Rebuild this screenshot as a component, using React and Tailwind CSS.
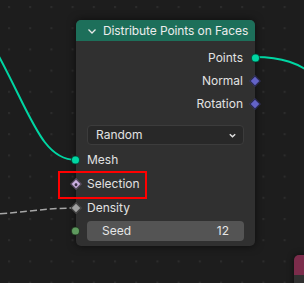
import React from "react";

const font = { fontFamily: "Inter, 'DejaVu Sans', sans-serif" };

function Circle({ color, side }) {
  return (
    <span
      className={`absolute top-1/2 -translate-y-1/2 w-[9px] h-[9px] rounded-full border border-black/60 ${
        side === "left" ? "left-[-5px]" : "right-[-5px]"
      } ${color}`}
    />
  );
}

function Diamond({ color, side, dot }) {
  return (
    <span
      className={`absolute top-1/2 w-[8px] h-[8px] -translate-y-1/2 rotate-45 border border-black/60 flex items-center justify-center ${
        side === "left" ? "left-[-4px]" : "right-[-4px]"
      } ${color}`}
    >
      {dot && <span className="w-[3px] h-[3px] rounded-full bg-[#3a2f44]" />}
    </span>
  );
}

function OutRow({ label, children }) {
  return (
    <div className="relative h-[23px] flex items-center justify-end pr-[12px] text-[12px] text-[#e2e2e2]">
      {label}
      {children}
    </div>
  );
}

function InRow({ label, children }) {
  return (
    <div className="relative h-[24px] flex items-center pl-[11px] text-[12px] text-[#e2e2e2]">
      {label}
      {children}
    </div>
  );
}

export default function App() {
  return (
    <div className="relative w-[304px] h-[283px] overflow-hidden bg-[#1d1d1d]" style={font}>
      {/* grid dots + links */}
      <svg className="absolute inset-0" width="304" height="283">
        <defs>
          <pattern id="dots" x="8" y="6" width="21.2" height="21.2" patternUnits="userSpaceOnUse">
            <rect width="2" height="2" fill="#2c2c2c" />
          </pattern>
        </defs>
        <rect width="304" height="283" fill="url(#dots)" />
        <path d="M -10 40 C 30 110, 40 160, 76 160" fill="none" stroke="#00d6a3" strokeWidth="2" />
        <path d="M 255 57 C 280 57, 300 62, 320 80" fill="none" stroke="#00d6a3" strokeWidth="2" />
        <path d="M -40 216 C 20 214, 40 208, 76 208" fill="none" stroke="#a6a6a6" strokeWidth="1.5" strokeDasharray="7 3" />
      </svg>

      {/* pink node corner */}
      <div className="absolute left-[294px] top-[255px] w-[40px] h-[40px] rounded-tl-[5px] overflow-hidden flex flex-col shadow-[0_0_6px_rgba(0,0,0,0.6)]">
        <div className="h-[20px] bg-[#7b2c4b]" />
        <div className="flex-1 bg-[#303030]" />
      </div>

      {/* main node */}
      <div className="absolute left-[76px] top-[20px] w-[179px] h-[226px] rounded-[5px] bg-[#303030] shadow-[0_0_8px_rgba(0,0,0,0.6)] flex flex-col">
        <div className="h-[21px] rounded-t-[5px] bg-[#1d6f5a] flex items-center pl-[11px] gap-[6px] text-[12px] tracking-[-0.1px] text-[#ececec] whitespace-nowrap">
          <svg width="10" height="10" viewBox="0 0 10 10" className="shrink-0">
            <path d="M1.5 3.5 L5 7 L8.5 3.5" fill="none" stroke="#e8e8e8" strokeWidth="1.3" />
          </svg>
          <span>Distribute Points on Faces</span>
        </div>
        <div className="flex flex-col pt-[5px]">
          <OutRow label="Points">
            <Circle color="bg-[#00d6a3]" side="right" />
          </OutRow>
          <OutRow label="Normal">
            <Diamond color="bg-[#6363c7]" side="right" />
          </OutRow>
          <OutRow label="Rotation">
            <Diamond color="bg-[#6363c7]" side="right" />
          </OutRow>

          <div className="mx-[11px] mt-[10px] h-[20px] rounded-[4px] bg-[#282828] border border-[#3c3c3c] flex items-center justify-between pl-[8px] pr-[6px] text-[12px] text-[#e2e2e2]">
            <span>Random</span>
            <svg width="9" height="9" viewBox="0 0 10 10">
              <path d="M2 3.5 L5 6.5 L8 3.5" fill="none" stroke="#e0e0e0" strokeWidth="1.6" />
            </svg>
          </div>

          <div className="mt-[3px]">
            <InRow label="Mesh">
              <Circle color="bg-[#00d6a3]" side="left" />
            </InRow>
            <InRow label="Selection">
              <Diamond color="bg-[#cdb0e2]" side="left" dot />
            </InRow>
            <InRow label="Density">
              <Diamond color="bg-[#a1a1a1]" side="left" />
            </InRow>
          </div>

          <div className="relative mt-[1px] mx-[11px] h-[20px] rounded-[4px] bg-[#545454] flex items-center justify-between px-[15px] text-[12px] text-[#e6e6e6]">
            <span>Seed</span>
            <span>12</span>
            <span className="absolute left-[-16px] top-1/2 -translate-y-1/2 w-[9px] h-[9px] rounded-full border border-black/60 bg-[#5e9a5e]" />
          </div>
        </div>
      </div>

      {/* highlight box */}
      <div className="absolute left-[58px] top-[171px] w-[89px] h-[28px] border-2 border-[#ff0000]" />
    </div>
  );
}
